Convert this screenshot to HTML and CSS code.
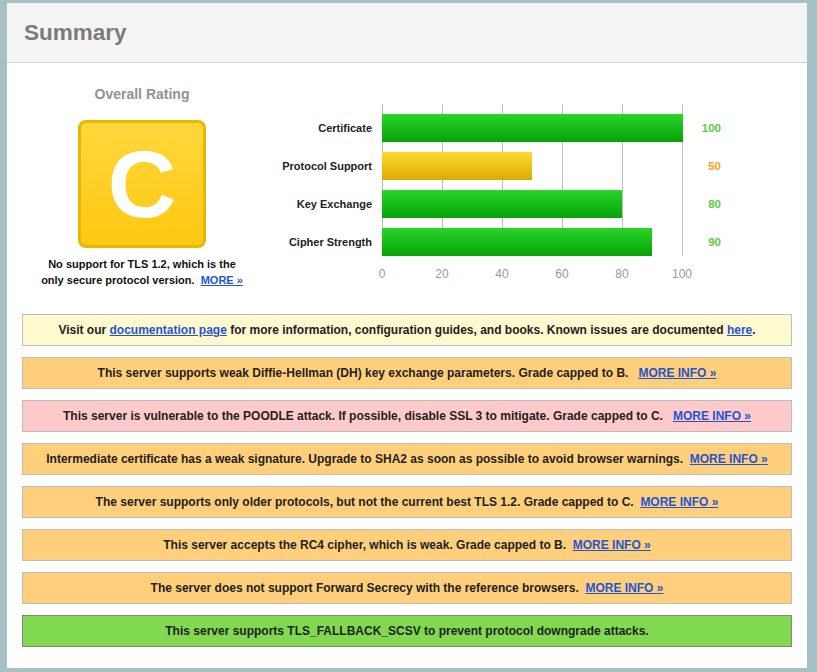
FILE: index.html
```html
<!DOCTYPE html>
<html>
<head>
<meta charset="utf-8">
<title>Summary</title>
<link rel="stylesheet" href="styles.css">
</head>
<body>
<div class="frame">
  <div class="header">Summary</div>
  <div class="content">
    <div class="top">
      <div class="rating">
        <div class="rating-title">Overall Rating</div>
        <div class="grade">C</div>
        <div class="rating-note">No support for TLS 1.2, which is the<br>only secure protocol version.&nbsp; <a href="#">MORE&nbsp;»</a></div>
      </div>
      <div class="chart">
        <div class="gridlines"></div>
        <div class="label r1">Certificate</div>
        <div class="bar green r1" style="width:301px"></div>
        <div class="value green-text r1">100</div>
        <div class="label r2">Protocol Support</div>
        <div class="bar yellow r2" style="width:150px"></div>
        <div class="value orange-text r2">50</div>
        <div class="label r3">Key Exchange</div>
        <div class="bar green r3" style="width:240px"></div>
        <div class="value green-text r3">80</div>
        <div class="label r4">Cipher Strength</div>
        <div class="bar green r4" style="width:270px"></div>
        <div class="value green-text r4">90</div>
        <div class="axis">
          <span>0</span><span>20</span><span>40</span><span>60</span><span>80</span><span>100</span>
        </div>
      </div>
    </div>
    <div class="notices">
      <div class="notice info">Visit our <a href="#">documentation page</a> for more information, configuration guides, and books. Known issues are documented <a href="#">here</a>.</div>
      <div class="notice warn">This server supports weak Diffie-Hellman (DH) key exchange parameters. Grade capped to B. &nbsp; <a href="#">MORE INFO »</a></div>
      <div class="notice error">This server is vulnerable to the POODLE attack. If possible, disable SSL 3 to mitigate. Grade capped to C. &nbsp; <a href="#">MORE INFO »</a></div>
      <div class="notice warn">Intermediate certificate has a weak signature. Upgrade to SHA2 as soon as possible to avoid browser warnings.&nbsp; <a href="#">MORE INFO »</a></div>
      <div class="notice warn">The server supports only older protocols, but not the current best TLS 1.2. Grade capped to C.&nbsp; <a href="#">MORE INFO »</a></div>
      <div class="notice warn">This server accepts the RC4 cipher, which is weak. Grade capped to B.&nbsp; <a href="#">MORE INFO »</a></div>
      <div class="notice warn">The server does not support Forward Secrecy with the reference browsers.&nbsp; <a href="#">MORE INFO »</a></div>
      <div class="notice good">This server supports TLS_FALLBACK_SCSV to prevent protocol downgrade attacks.</div>
    </div>
  </div>
</div>
</body>
</html>
```

FILE: styles.css
```css
html, body {
  margin: 0;
  padding: 0;
}
body {
  background: #a6c1c4;
  font-family: "Liberation Sans", Arial, Helvetica, sans-serif;
  color: #222;
  overflow: hidden;
}
.frame {
  margin: 3px 0 0 7px;
  width: 800px;
  height: 665px;
  background: #fff;
}
.header {
  height: 59px;
  line-height: 59px;
  background: #f5f5f5;
  border-bottom: 1px solid #c9d5d5;
  padding-left: 17px;
  font-size: 22.5px;
  font-weight: bold;
  color: #7b7b7b;
}
.top {
  display: flex;
  align-items: flex-start;
  height: 225px;
}
.rating {
  width: 270px;
  display: flex;
  flex-direction: column;
  align-items: center;
}
.rating-title {
  margin-top: 23px;
  font-size: 14px;
  line-height: 16px;
  font-weight: bold;
  color: #929292;
}
.grade {
  margin-top: 18px;
  width: 128px;
  height: 128px;
  box-sizing: border-box;
  border: 3px solid #e9b703;
  border-radius: 8px;
  background: linear-gradient(#ffd73c, #ffc812);
  color: #fff;
  font-size: 95px;
  font-weight: bold;
  display: flex;
  align-items: center;
  justify-content: center;
  line-height: 1;
}
.rating-note {
  margin-top: 8px;
  font-size: 11px;
  line-height: 16px;
  font-weight: bold;
  text-align: center;
  color: #111;
}
a {
  color: #1f55d4;
  text-decoration: underline;
}
.chart {
  margin-top: 41px;
  display: grid;
  grid-template-columns: 105px 301px 38px;
  grid-template-rows: 0px 28px 28px 28px 28px auto;
  row-gap: 10px;
}
.gridlines {
  grid-column: 2;
  grid-row: 1 / 6;
  background-image: repeating-linear-gradient(to right, #bdbdbd 0, #bdbdbd 1px, transparent 1px, transparent 60px);
}
.r1 { grid-row: 2; }
.r2 { grid-row: 3; }
.r3 { grid-row: 4; }
.r4 { grid-row: 5; }
.label {
  grid-column: 1;
  align-self: center;
  text-align: right;
  padding-right: 10px;
  font-size: 11px;
  font-weight: bold;
  color: #222;
}
.bar {
  grid-column: 2;
  height: 28px;
  position: relative;
  z-index: 1;
}
.bar.green {
  background: linear-gradient(#2ad42a, #06a306);
}
.bar.yellow {
  background: linear-gradient(#ffda2c, #d7ab00);
}
.value {
  grid-column: 3;
  align-self: center;
  text-align: right;
  font-size: 11.5px;
  font-weight: bold;
}
.green-text { color: #5ccb45; }
.orange-text { color: #f7a21f; }
.axis {
  grid-column: 2 / 4;
  grid-row: 6;
  margin-left: -30px;
  margin-top: 1px;
  display: flex;
  font-size: 12px;
  line-height: 14px;
  color: #9a9a9a;
}
.axis span {
  width: 60px;
  text-align: center;
}
.notices {
  margin: 26px 15px 0 15px;
  display: flex;
  flex-direction: column;
  gap: 11px;
}
.notice {
  height: 32px;
  box-sizing: border-box;
  border: 1px solid #bdbdbd;
  display: flex;
  align-items: center;
  justify-content: center;
  font-size: 12px;
  font-weight: bold;
  color: #222;
  white-space: pre-wrap;
}
.notice a {
  margin-left: 0;
}
.info { background: #fff9d0; }
.warn { background: #ffcf7b; }
.error { background: #ffcaca; }
.good {
  background: #80d94f;
  border-color: #858585;
}
```
